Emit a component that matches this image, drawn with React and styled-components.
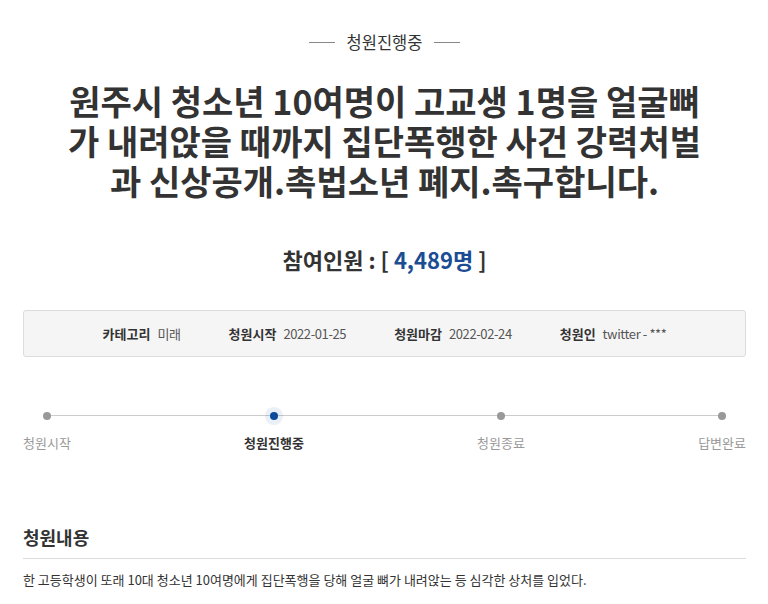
import React from "react";
import styled, { createGlobalStyle } from "styled-components";

const GlobalStyle = createGlobalStyle`
  body {
    margin: 0;
    background: #fff;
    font-family: "Noto Sans CJK KR", "Noto Sans", sans-serif;
    color: #333;
  }
`;

const steps = [
  { label: "청원시작" },
  { label: "청원진행중", active: true },
  { label: "청원종료" },
  { label: "답변완료" },
];

const info = [
  { label: "카테고리", value: "미래" },
  { label: "청원시작", value: "2022-01-25" },
  { label: "청원마감", value: "2022-02-24" },
  { label: "청원인", value: "twitter - ***" },
];

const titleLines = [
  "원주시 청소년 10여명이 고교생 1명을 얼굴뼈",
  "가 내려앉을 때까지 집단폭행한 사건 강력처벌",
  "과 신상공개.촉법소년 폐지.촉구합니다.",
];

function App() {
  return (
    <Page>
      <GlobalStyle />
      <Status>청원진행중</Status>
      <Title>
        {titleLines.map((line) => (
          <TitleLine key={line}>{line}</TitleLine>
        ))}
      </Title>
      <Count>
        참여인원 : [ <Num>4,489명</Num> ]
      </Count>
      <InfoBox>
        {info.map((item) => (
          <InfoItem key={item.label}>
            <InfoLabel>{item.label}</InfoLabel>
            <InfoValue>{item.value}</InfoValue>
          </InfoItem>
        ))}
      </InfoBox>
      <Steps>
        {steps.map((s) => (
          <Step key={s.label}>
            <Dot $active={s.active} />
            <StepLabel $active={s.active}>{s.label}</StepLabel>
          </Step>
        ))}
      </Steps>
      <SectionTitle>청원내용</SectionTitle>
      <Body>
        한 고등학생이 또래 10대 청소년 10여명에게 집단폭행을 당해 얼굴 뼈가
        내려앉는 등 심각한 상처를 입었다.
      </Body>
    </Page>
  );
}

const Page = styled.div`
  padding: 30px 22px 0 23px;
`;

const Status = styled.div`
  display: flex;
  justify-content: center;
  align-items: center;
  gap: 12px;
  font-size: 16.5px;
  line-height: 24px;
  color: #333;

  &::before,
  &::after {
    content: "";
    width: 26px;
    height: 1px;
    background: #888;
  }
`;

const Title = styled.h1`
  margin: 27px 0 0;
  text-align: center;
  font-size: 34px;
  font-weight: 700;
  color: #333;
  white-space: nowrap;
`;

const TitleLine = styled.span`
  display: block;
  line-height: 40px;
`;

const Count = styled.div`
  margin-top: 43px;
  text-align: center;
  font-size: 22px;
  line-height: 30px;
  font-weight: 700;
  color: #333;
`;

const Num = styled.span`
  color: #1b4d94;
`;

const InfoBox = styled.div`
  margin-top: 36px;
  height: 45px;
  display: flex;
  justify-content: center;
  align-items: center;
  gap: 48px;
  background: #f5f5f5;
  border: 1px solid #dcdcdc;
  border-radius: 3px;
  font-size: 13px;
`;

const InfoItem = styled.div`
  display: flex;
  align-items: center;
  gap: 7px;
`;

const InfoLabel = styled.span`
  font-weight: 700;
  color: #333;
`;

const InfoValue = styled.span`
  color: #555;
  letter-spacing: -0.4px;
`;

const Steps = styled.div`
  position: relative;
  margin-top: 55px;
  display: flex;
  justify-content: space-between;

  &::before {
    content: "";
    position: absolute;
    top: 3px;
    left: 23px;
    right: 24px;
    height: 1px;
    background: #ccc;
  }
`;

const Step = styled.div`
  position: relative;
  display: flex;
  flex-direction: column;
  align-items: center;
  gap: 14px;
`;

const Dot = styled.span`
  width: 8px;
  height: 8px;
  border-radius: 50%;
  background: ${({ $active }) => ($active ? "#0d4a9c" : "#999")};
  box-shadow: ${({ $active }) =>
    $active ? "0 0 0 5px rgba(40, 110, 210, 0.1)" : "none"};
`;

const StepLabel = styled.span`
  font-size: 13px;
  line-height: 18px;
  font-weight: ${({ $active }) => ($active ? 700 : 400)};
  color: ${({ $active }) => ($active ? "#333" : "#999")};
`;

const SectionTitle = styled.h2`
  margin: 72px 0 0;
  padding-bottom: 8px;
  border-bottom: 1px solid #ddd;
  font-size: 18px;
  line-height: 26px;
  font-weight: 700;
  color: #333;
`;

const Body = styled.p`
  margin: 11px 0 0;
  font-size: 13px;
  line-height: 20px;
  color: #333;
`;

export default App;
